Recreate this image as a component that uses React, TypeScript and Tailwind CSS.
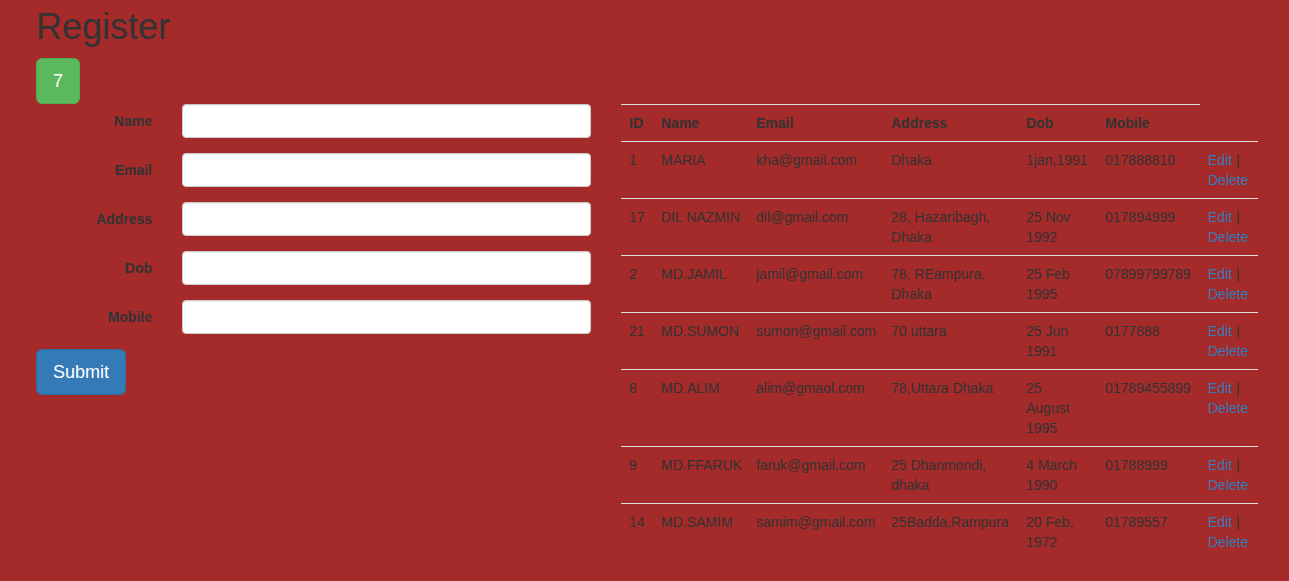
import { Fragment } from 'react'

const fields = ['Name', 'Email', 'Address', 'Dob', 'Mobile']

const rows = [
  { id: '1', name: 'MARIA', email: 'kha@gmail.com', address: 'Dhaka', dob: '1jan,1991', mobile: '017888810' },
  { id: '17', name: 'DIL NAZMIN', email: 'dil@gmail.com', address: '28, Hazaribagh, Dhaka', dob: '25 Nov 1992', mobile: '017894999' },
  { id: '2', name: 'MD.JAMIL', email: 'jamil@gmail.com', address: '78, REampura, Dhaka', dob: '25 Feb 1995', mobile: '07899799789' },
  { id: '21', name: 'MD.SUMON', email: 'sumon@gmail.com', address: '70 uttara', dob: '25 Jun 1991', mobile: '0177888' },
  { id: '8', name: 'MD.ALIM', email: 'alim@gmaol.com', address: '78,Uttara Dhaka', dob: '25 August 1995', mobile: '01789455899' },
  { id: '9', name: 'MD.FFARUK', email: 'faruk@gmail.com', address: '25 Dhanmondi, dhaka', dob: '4 March 1990', mobile: '01788999' },
  { id: '14', name: 'MD.SAMIM', email: 'samim@gmail.com', address: '25Badda,Rampura', dob: '20 Feb, 1972', mobile: '01789557' },
]

const headers = ['ID', 'Name', 'Email', 'Address', 'Dob', 'Mobile']

export default function App() {
  return (
    <div className="min-h-[581px] bg-[#a52a2a] pl-[36px] font-['Liberation_Sans',Arial,sans-serif] text-[14px] leading-[20px] text-[#333]">
      <h1 className="m-0 pt-[7px] pb-[11px] text-[36px] font-normal leading-[40px]">Register</h1>

      <button className="h-[46px] w-[44px] rounded-[6px] border border-[#4cae4c] bg-[#5cb85c] text-[18px] leading-[24px] text-white">
        7
      </button>

      <div className="flex gap-[30px]">
        {/* form */}
        <div className="w-[555px] shrink-0">
          {fields.map((f) => (
            <div key={f} className="mb-[15px] flex gap-[30px]">
              <label className="w-[116px] pt-[7px] text-right font-bold">{f}</label>
              <input
                type="text"
                className="h-[34px] w-[409px] rounded-[4px] border border-[#ccc] bg-white px-3 shadow-[inset_0_1px_1px_rgba(0,0,0,0.075)] outline-none"
              />
            </div>
          ))}
          <button className="h-[46px] w-[90px] rounded-[6px] border border-[#2e6da4] bg-[#337ab7] text-[18px] leading-[24px] text-white">
            Submit
          </button>
        </div>

        {/* table */}
        <table className="w-[637px] table-fixed border-collapse">
          <colgroup>
            <col className="w-[32px]" />
            <col className="w-[95px]" />
            <col className="w-[135px]" />
            <col className="w-[135px]" />
            <col className="w-[77px]" />
            <col className="w-[105px]" />
            <col className="w-[58px]" />
          </colgroup>
          <thead>
            <tr>
              {headers.map((h, i) => (
                <th
                  key={h}
                  className={`border-t border-[#ddd] p-[8px] text-left font-bold whitespace-nowrap ${i === 5 ? 'pl-[10px]' : ''}`}
                >
                  {h}
                </th>
              ))}
            </tr>
          </thead>
          <tbody>
            {rows.map((r) => (
              <tr key={r.id} className="border-t border-[#ddd] align-top">
                <td className="p-[8px] whitespace-nowrap">{r.id}</td>
                <td className="p-[8px] whitespace-nowrap">{r.name}</td>
                <td className="p-[8px] whitespace-nowrap">{r.email}</td>
                <td className="p-[8px]">{r.address}</td>
                <td className="p-[8px]">{r.dob}</td>
                <td className="p-[8px] pl-[10px] whitespace-nowrap">{r.mobile}</td>
                <td className="p-[8px]">
                  <Fragment>
                    <a className="text-[#337ab7]">Edit</a> | <a className="text-[#337ab7]">Delete</a>
                  </Fragment>
                </td>
              </tr>
            ))}
          </tbody>
        </table>
      </div>
    </div>
  )
}
